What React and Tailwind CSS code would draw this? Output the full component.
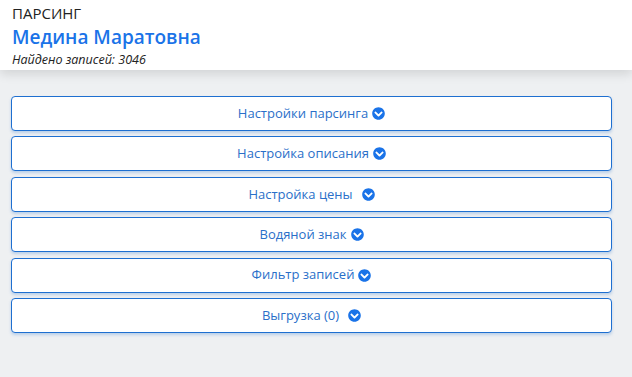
import { FaChevronCircleDown } from 'react-icons/fa';

const SECTIONS = [
  { title: 'Настройки парсинга', gap: false },
  { title: 'Настройка описания', gap: false },
  { title: 'Настройка цены', gap: true },
  { title: 'Водяной знак', gap: false },
  { title: 'Фильтр записей', gap: false },
  { title: 'Выгрузка (0)', gap: true },
];

export default function App() {
  return (
    <div className="min-h-[377px] bg-[#eef0f2]" style={{ fontFamily: '"Open Sans", "Noto Sans", sans-serif' }}>
      {/* шапка */}
      <header className="h-[70px] bg-white px-[12px] pt-[3px] shadow-[0_4px_10px_rgba(0,0,0,0.12)]">
        <div className="text-[15px] leading-[20px] text-[#222]">ПАРСИНГ</div>
        <div className="text-[19px] leading-[28px] font-semibold text-[#1a73e8]">Медина Маратовна</div>
        <div className="text-[12.5px] leading-[17px] italic text-[#222]">Найдено записей: 3046</div>
      </header>

      {/* секции */}
      <div className="ml-[11px] mr-[20px] pt-[26px] flex flex-col gap-[5.4px]">
        {SECTIONS.map((s, i) => (
          <div key={i}
            className="h-[35px] bg-white border border-[#1e6fd0] rounded-[4px] flex items-center justify-center text-[13px] text-[#2a6fc9] shadow-[0_2px_3px_rgba(30,111,208,0.25)]">
            <span>{s.title}</span>
            <FaChevronCircleDown className={`${s.gap ? 'ml-[9px]' : 'ml-[4px]'} text-[13px] text-[#1a73e8]`} />
          </div>
        ))}
      </div>
    </div>
  );
}
